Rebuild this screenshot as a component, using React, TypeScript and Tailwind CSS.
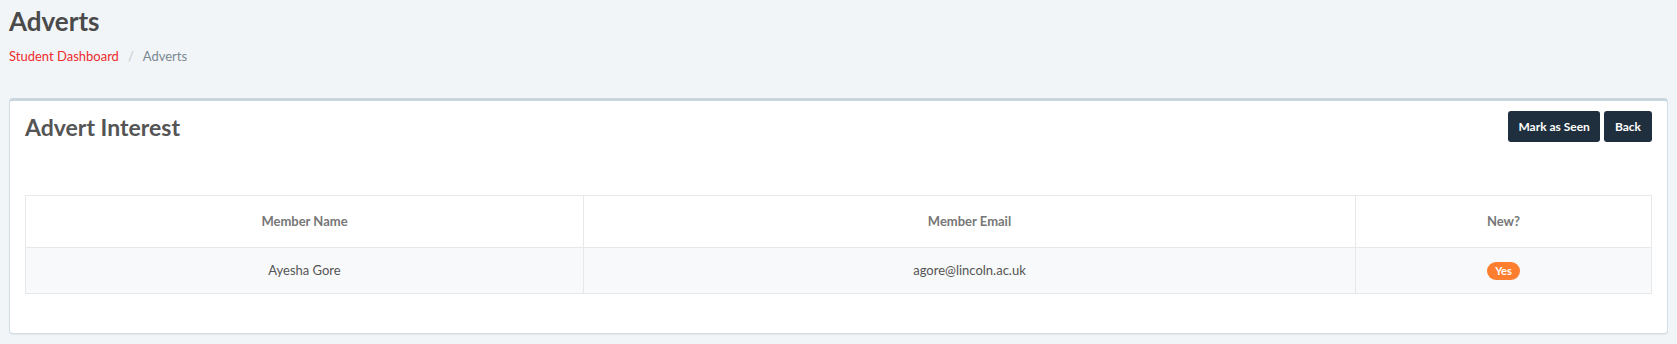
const rows = [{ name: 'Ayesha Gore', email: 'agore@lincoln.ac.uk', isNew: true }];

export default function App() {
  return (
    <div className="min-h-screen bg-[#f1f5f8] px-[9px] pt-[4px] font-['Lato','Liberation_Sans',sans-serif] text-[#555]">
      <h1 className="text-[26px] font-bold leading-[34px] text-[#4a4a4a]">Adverts</h1>
      <nav className="mt-[8px] flex items-center text-[13px] leading-[20px]">
        <a href="#" className="text-[#ee2b2b]">Student Dashboard</a>
        <span className="px-[9px] text-[#c4c9cd]">/</span>
        <span className="text-[#7a8891]">Adverts</span>
      </nav>

      <div className="mt-[32px] rounded-[4px] border border-t-[3px] border-[#d3dee5] border-t-[#c9d6de] bg-white px-[15px] pb-[39px] pt-[9px] shadow-[0_1px_1px_rgba(0,0,0,0.06)]">
        <div className="flex items-start justify-between">
          <h2 className="pt-[3px] text-[23px] font-bold leading-[28px] text-[#555]">Advert Interest</h2>
          <div className="flex gap-[4px] pt-[1px]">
            <button className="h-[31px] rounded-[3px] bg-[#1f2f3e] px-[10px] text-[12px] font-bold text-white">Mark as Seen</button>
            <button className="h-[31px] rounded-[3px] bg-[#1f2f3e] px-[11px] text-[12px] font-bold text-white">Back</button>
          </div>
        </div>

        <table className="mt-[53px] w-full table-fixed border-collapse border border-[#e6e8ea] text-center text-[13px]">
          <thead>
            <tr className="h-[52px]">
              <th className="w-[558px] border border-[#e6e8ea] font-bold text-[#777]">Member Name</th>
              <th className="w-[772px] border border-[#e6e8ea] font-bold text-[#777]">Member Email</th>
              <th className="border border-[#e6e8ea] font-bold text-[#777]">New?</th>
            </tr>
          </thead>
          <tbody>
            {rows.map((r) => (
              <tr key={r.email} className="h-[46px] bg-[#f8f9fa]">
                <td className="border border-[#e6e8ea] text-[#555]">{r.name}</td>
                <td className="border border-[#e6e8ea] text-[#555]">{r.email}</td>
                <td className="border border-[#e6e8ea]">
                  {r.isNew && (
                    <span className="inline-block h-[18px] rounded-full bg-[#fd7e2f] px-[8px] text-[11px] font-bold leading-[18px] text-white">Yes</span>
                  )}
                </td>
              </tr>
            ))}
          </tbody>
        </table>
      </div>
    </div>
  );
}
